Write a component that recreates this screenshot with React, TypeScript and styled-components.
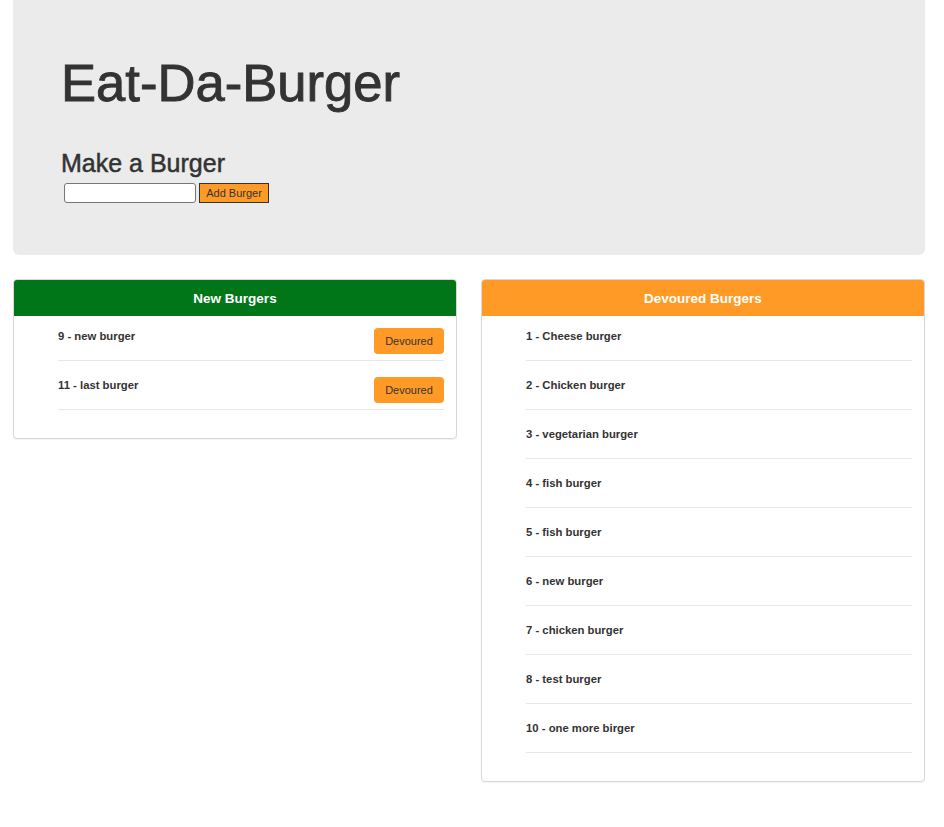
import React from "react";
import styled, { createGlobalStyle } from "styled-components";

const GlobalStyle = createGlobalStyle`
  html, body { margin: 0; padding: 0; background: #ffffff; }
  body {
    font-family: "Liberation Sans", Arial, Helvetica, sans-serif;
    color: #333333;
  }
  * { box-sizing: border-box; }
`;

const Page = styled.div`
  padding: 0 19px 40px 13px;
`;

const Jumbotron = styled.header`
  background: #ebebeb;
  border-radius: 0 0 6px 6px;
  padding: 54px 48px 52px 48px;
`;

const Title = styled.h1`
  margin: 0;
  font-size: 52.6px;
  line-height: 1.1;
  font-weight: 400;
  color: #333333;
  -webkit-text-stroke: 0.9px #333333;
`;

const Subtitle = styled.h2`
  margin: 38px 0 0 0;
  font-size: 25px;
  line-height: 1.1;
  font-weight: 400;
  color: #333333;
  -webkit-text-stroke: 0.5px #333333;
`;

const Form = styled.form`
  display: flex;
  align-items: center;
  gap: 3px;
  margin-top: 6px;
  padding-left: 3px;
`;

const TextInput = styled.input`
  width: 132px;
  height: 20px;
  border: 1px solid #767676;
  border-radius: 3px;
  background: #ffffff;
  padding: 0 4px;
  font-family: inherit;
  font-size: 11px;
`;

const AddButton = styled.button`
  width: 70px;
  height: 20px;
  border: 1px solid #333333;
  background: #ff9a26;
  color: #333333;
  font-family: inherit;
  font-size: 11px;
  padding: 0;
`;

const Columns = styled.main`
  display: grid;
  grid-template-columns: 1fr 1fr;
  gap: 24px;
  margin-top: 24px;
  align-items: start;
`;

const Panel = styled.section`
  border: 1px solid #d8d8d8;
  border-radius: 4px;
  background: #ffffff;
  box-shadow: 0 1px 1px rgba(0, 0, 0, 0.05);
  overflow: hidden;
`;

const PanelHeading = styled.div<{ $bg: string }>`
  height: 36px;
  background: ${(p) => p.$bg};
  display: flex;
  align-items: center;
  justify-content: center;
`;

const PanelTitle = styled.h3`
  margin: 0;
  font-size: 13.5px;
  font-weight: 700;
  color: #ffffff;
`;

const PanelBody = styled.ul`
  list-style: none;
  margin: 0;
  padding: 0 12px 28px 44px;
`;

const Row = styled.li`
  display: flex;
  justify-content: space-between;
  align-items: flex-start;
  min-height: 49px;
  padding: 16px 0 6px 0;
  border-bottom: 1px solid #e6e6e6;
  &:first-child {
    min-height: 45px;
    padding-top: 12px;
  }
`;

const ItemText = styled.span`
  font-size: 11.3px;
  line-height: 16px;
  font-weight: 700;
  color: #333333;
`;

const DevourButton = styled.button`
  width: 70px;
  height: 26px;
  border: none;
  border-radius: 4px;
  background: #ff9a26;
  color: #333333;
  font-family: inherit;
  font-size: 11px;
  padding: 0;
  flex-shrink: 0;
`;

const newBurgers = [
  { id: 9, name: "new burger" },
  { id: 11, name: "last burger" },
];

const devoured = [
  { id: 1, name: "Cheese burger" },
  { id: 2, name: "Chicken burger" },
  { id: 3, name: "vegetarian burger" },
  { id: 4, name: "fish burger" },
  { id: 5, name: "fish burger" },
  { id: 6, name: "new burger" },
  { id: 7, name: "chicken burger" },
  { id: 8, name: "test burger" },
  { id: 10, name: "one more birger" },
];

export default function App() {
  return (
    <Page>
      <GlobalStyle />
      <Jumbotron>
        <Title>Eat-Da-Burger</Title>
        <Subtitle>Make a Burger</Subtitle>
        <Form onSubmit={(e) => e.preventDefault()}>
          <TextInput type="text" />
          <AddButton type="submit">Add Burger</AddButton>
        </Form>
      </Jumbotron>
      <Columns>
        <Panel>
          <PanelHeading $bg="#007618">
            <PanelTitle>New Burgers</PanelTitle>
          </PanelHeading>
          <PanelBody>
            {newBurgers.map((b) => (
              <Row key={b.id}>
                <ItemText>
                  {b.id} - {b.name}
                </ItemText>
                <DevourButton type="button">Devoured</DevourButton>
              </Row>
            ))}
          </PanelBody>
        </Panel>
        <Panel>
          <PanelHeading $bg="#ff9a26">
            <PanelTitle>Devoured Burgers</PanelTitle>
          </PanelHeading>
          <PanelBody>
            {devoured.map((b) => (
              <Row key={b.id}>
                <ItemText>
                  {b.id} - {b.name}
                </ItemText>
              </Row>
            ))}
          </PanelBody>
        </Panel>
      </Columns>
    </Page>
  );
}
